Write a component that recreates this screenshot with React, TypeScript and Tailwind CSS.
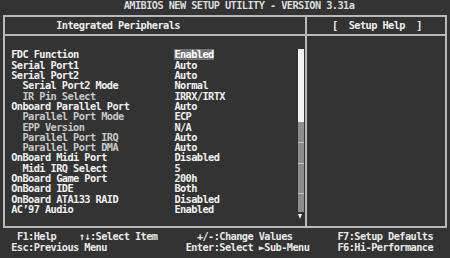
import React from "react";

type Item = { label: string; value: string; sub?: boolean; dim?: boolean; hl?: boolean };

const items: Item[] = [
  { label: "FDC Function", value: "Enabled", hl: true },
  { label: "Serial Port1", value: "Auto" },
  { label: "Serial Port2", value: "Auto" },
  { label: "Serial Port2 Mode", value: "Normal", sub: true },
  { label: "IR Pin Select", value: "IRRX/IRTX", sub: true, dim: true },
  { label: "Onboard Parallel Port", value: "Auto" },
  { label: "Parallel Port Mode", value: "ECP", sub: true, dim: true },
  { label: "EPP Version", value: "N/A", sub: true, dim: true },
  { label: "Parallel Port IRQ", value: "Auto", sub: true, dim: true },
  { label: "Parallel Port DMA", value: "Auto", sub: true, dim: true },
  { label: "OnBoard Midi Port", value: "Disabled" },
  { label: "Midi IRQ Select", value: "5", sub: true },
  { label: "OnBoard Game Port", value: "200h" },
  { label: "OnBoard IDE", value: "Both" },
  { label: "OnBoard ATA133 RAID", value: "Disabled" },
  { label: "AC\u201997 Audio", value: "Enabled" },
];

function Row({ it }: { it: Item }) {
  return (
    <div className="flex h-[10.32px] leading-[10.32px] pl-[6.25px]">
      <div className={`w-[163.125px] whitespace-pre ${it.sub ? "pl-[11.25px]" : ""} ${it.dim ? "text-[#c8c8c8]" : "text-[#f0f0f0]"}`}>
        {it.label}
      </div>
      <div className="flex-1 whitespace-pre text-[#f0f0f0]">
        {it.hl ? <span className="inline-block h-[10.32px] bg-[#727272] text-white">{it.value}</span> : it.value}
      </div>
    </div>
  );
}

function ScrollBar() {
  return (
    <div className="w-[5.625px] pt-[13.34px] flex flex-col">
      <div className="h-[72.3px] bg-[#f2f2f2]" />
      <div className="h-[20.3px] bg-[#8e8e8e]" />
      <div className="h-[1px] bg-[#c4c4c4]" />
      <div className="h-[19.6px] bg-[#8e8e8e]" />
      <div className="h-[1px] bg-[#c4c4c4]" />
      <div className="h-[29px] bg-[#8e8e8e]" />
      <div className="h-[1px] bg-[#c4c4c4]" />
      <div className="h-[18.5px] bg-[#8e8e8e]" />
      <div className="h-[1.5px]" />
      <div className="w-0 h-0 border-l-[2.5px] border-r-[2.5px] border-t-[5px] border-l-transparent border-r-transparent border-t-[#f0f0f0]" />
    </div>
  );
}

export default function App() {
  return (
    <div className="w-[450px] h-[258px] bg-[#333333] text-[#e6e6e6] font-['DejaVu_Sans_Mono',monospace] font-bold text-[10.3px] tracking-[-0.577px] overflow-hidden">
      <div className="h-[15px]">
        <div className="h-[11px] leading-[11px] pl-[123.75px] whitespace-pre text-[#dcdcdc]">
          AMIBIOS NEW SETUP UTILITY - VERSION 3.31a
        </div>
      </div>
      <div className="ml-[3px] w-[444px] h-[213px] border-2 border-[#b8b8b8] flex">
        <div className="w-[300px] flex flex-col">
          <div className="h-[19px] border-b-2 border-[#b8b8b8] flex items-center pl-[51.25px] whitespace-pre text-[#eeeeee]">
            Integrated Peripherals
          </div>
          <div className="flex flex-1">
            <div className="w-[293.125px] pt-[13.34px]">
              {items.map((it, i) => (
                <Row key={i} it={it} />
              ))}
            </div>
            <ScrollBar />
          </div>
        </div>
        <div className="flex-1 border-l-2 border-[#b8b8b8] flex flex-col">
          <div className="h-[19px] border-b-2 border-[#b8b8b8] flex items-center pl-[24.875px] whitespace-pre text-[#eeeeee]">
            [  Setup Help  ]
          </div>
          <div className="flex-1" />
        </div>
      </div>
      <div className="pt-[3.34px] text-[#e8e8e8]">
        <div className="flex h-[10.32px] leading-[10.32px] pl-[16.875px] whitespace-pre">
          <div className="w-[61.875px]">F1:Help</div>
          <div className="w-[118.125px]">↑↓:Select Item</div>
          <div className="w-[140.625px]">+/-:Change Values</div>
          <div>F7:Setup Defaults</div>
        </div>
        <div className="flex h-[10.32px] leading-[10.32px] pl-[11.25px] whitespace-pre">
          <div className="w-[174.375px]">Esc:Previous Menu</div>
          <div className="w-[151.875px]">Enter:Select ►Sub-Menu</div>
          <div>F6:Hi-Performance</div>
        </div>
      </div>
    </div>
  );
}
